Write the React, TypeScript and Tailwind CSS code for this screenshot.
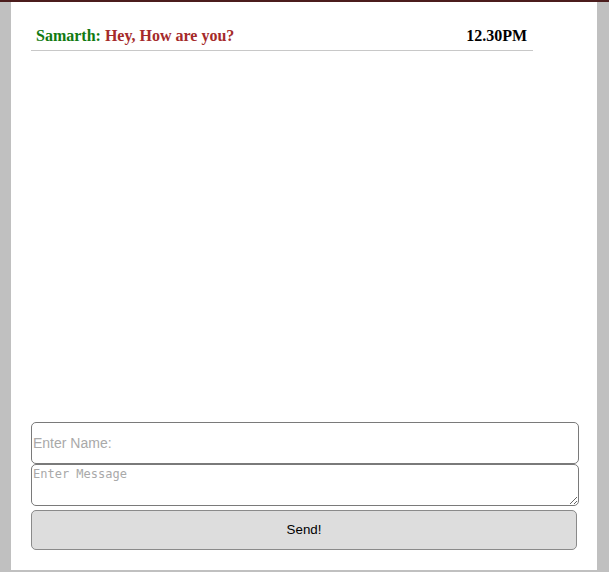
import React from "react";

export default function App() {
  return (
    <div className="h-[572px] w-[609px] overflow-hidden bg-[#c0c0c0] border-t-2 border-[#4b1c1c]">
      <div className="ml-[11px] flex h-[568px] w-[586px] flex-col bg-white px-[20px] pb-[20px]">
        <div className="pt-[21px]">
          <div className="flex w-[502px] items-center justify-between border-b border-[#c8c8c8] pb-[1px] pl-[5px] pr-[6px] font-['Liberation_Serif',serif] text-[16px] font-bold leading-[26px]">
            <div>
              <span className="text-[#117a11]">Samarth: </span>
              <span className="text-[#a52a2a]">Hey, How are you?</span>
            </div>
            <div className="text-black">12.30PM</div>
          </div>
        </div>
        <div className="flex-1" />
        <div className="flex flex-col">
          <input
            type="text"
            placeholder="Enter Name:"
            className="box-border h-[42px] w-[548px] rounded-[5px] border border-[#7a7a7a] px-[1px] font-['Liberation_Sans',Arial,sans-serif] text-[14px] text-black outline-none placeholder:text-[#a9a9a9]"
          />
          <textarea
            placeholder="Enter Message"
            className="box-border h-[42px] w-[548px] resize-y rounded-[5px] border border-[#7a7a7a] px-[1px] pt-[2px] font-['DejaVu_Sans_Mono',monospace] text-[12px] leading-[15px] text-black outline-none placeholder:text-[#a9a9a9]"
          />
          <button className="mt-[4px] box-border h-[40px] w-[546px] rounded-[5px] border border-[#8a8a8a] bg-[#dddddd] font-['Liberation_Sans',Arial,sans-serif] text-[13.33px] text-black">
            Send!
          </button>
        </div>
      </div>
    </div>
  );
}
